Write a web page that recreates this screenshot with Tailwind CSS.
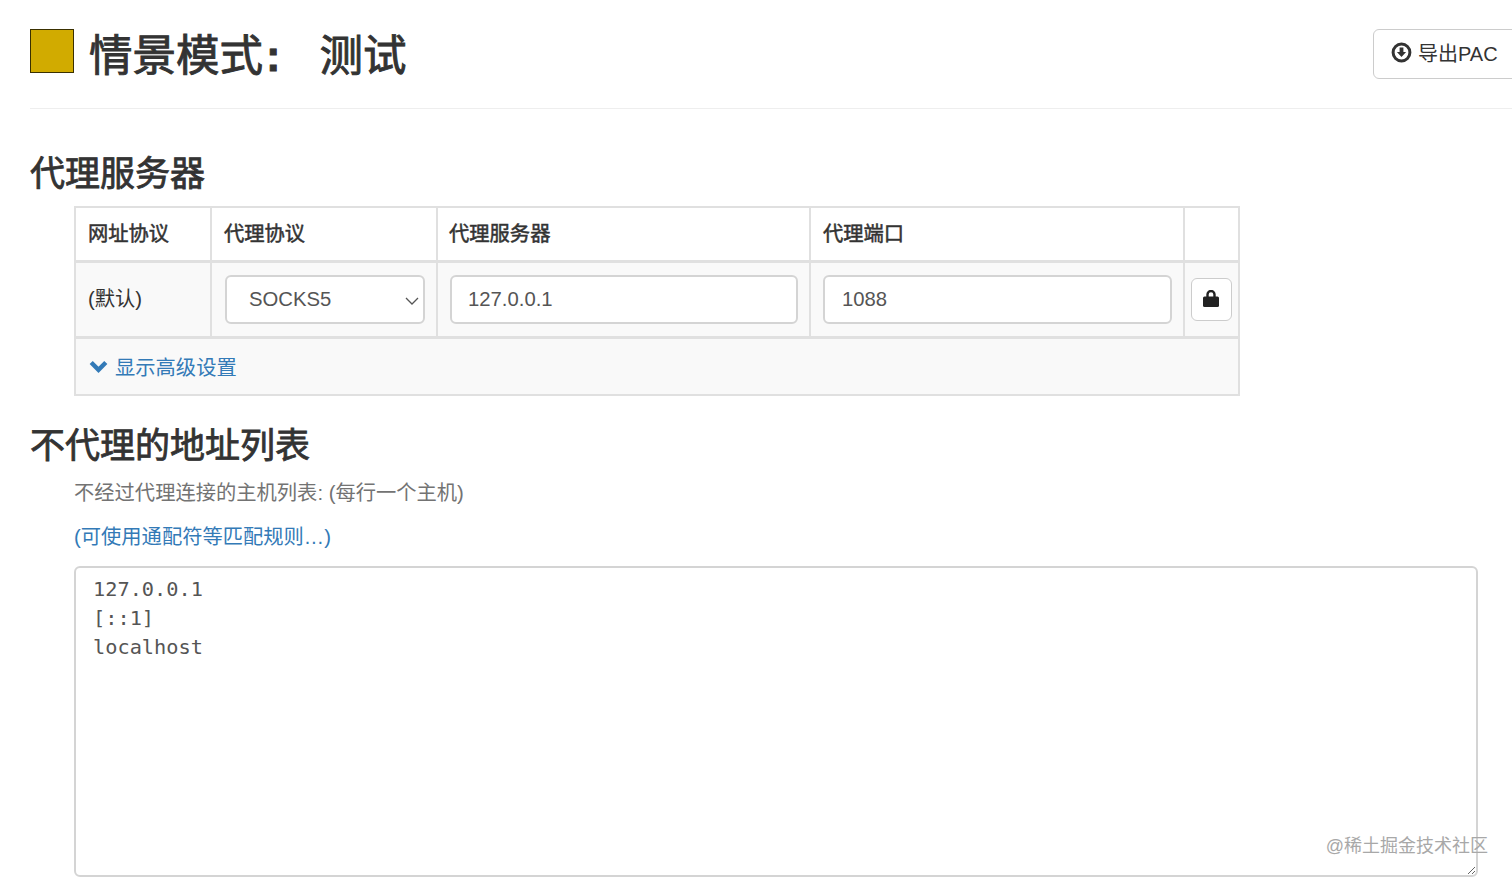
<!DOCTYPE html>
<html lang="zh-CN">
  <head>
    <meta charset="UTF-8" />
    <meta name="viewport" content="width=device-width, initial-scale=1.0" />
    <title>情景模式: 测试</title>
    <script src="https://cdn.jsdelivr.net/npm/@tailwindcss/browser@4"></script>
  </head>
  <body class="bg-white">
    <div
      class="relative h-[880px] overflow-hidden pl-[30px] text-[#333] font-['Liberation_Sans','Noto_Sans_CJK_SC',sans-serif]"
    >
      <!-- page header -->
      <header class="flex h-[109px] items-start justify-between border-b border-[#eeeeee]">
        <h1 class="mt-[29px] flex items-start text-[43.5px] leading-[50px] font-normal [-webkit-text-stroke:0.9px_#333]">
          <span class="h-[44px] w-[44px] border border-[#3a3000] bg-[#d1ab00]"></span>
          <span class="mt-[2px] ml-[15px]">情景模式</span>
          <span class="mt-[2px] ml-[3px] font-bold">:</span>
          <span class="mt-[2px] ml-[39px]">测试</span>
        </h1>
        <button
          class="mt-[29px] -mr-[12px] flex h-[50px] w-[151px] items-center rounded-[6px] border border-[#cccccc] pl-[17px] text-[20px] text-[#333]"
        >
          <svg class="mb-[4px] h-[21px] w-[21px]" viewBox="0 0 21 21">
            <circle cx="10.5" cy="10.5" r="8.4" fill="none" stroke="#333" stroke-width="3" />
            <path d="M8.6 5.5h3.8v4.6h2.7l-4.6 5-4.6-5h2.7z" fill="#333" />
          </svg>
          <span class="ml-[6px]">导出PAC</span>
        </button>
      </header>

      <h2 class="mt-[42px] text-[35px] leading-[46px] font-normal [-webkit-text-stroke:0.8px_#333]">代理服务器</h2>

      <!-- proxy table -->
      <table
        class="mt-[9px] ml-[44px] w-[1164px] table-fixed border-collapse border-2 border-[#e0e0e0] text-[20.3px]"
      >
        <colgroup>
          <col class="w-[136px]" />
          <col class="w-[226px]" />
          <col class="w-[373px]" />
          <col class="w-[374px]" />
          <col class="w-[55px]" />
        </colgroup>
        <thead>
          <tr class="h-[54px] border-b-[3px] border-[#e0e0e0] text-left">
            <th class="border-r-2 border-[#e0e0e0] pt-[1px] pl-[12px] font-normal [-webkit-text-stroke:0.5px_#333]">网址协议</th>
            <th class="border-r-2 border-[#e0e0e0] pt-[1px] pl-[12px] font-normal [-webkit-text-stroke:0.5px_#333]">代理协议</th>
            <th class="border-r-2 border-[#e0e0e0] pt-[1px] pl-[11px] font-normal [-webkit-text-stroke:0.5px_#333]">代理服务器</th>
            <th class="border-r-2 border-[#e0e0e0] pt-[1px] pl-[12px] font-normal [-webkit-text-stroke:0.5px_#333]">代理端口</th>
            <th></th>
          </tr>
        </thead>
        <tbody class="bg-[#f9f9f9]">
          <tr class="h-[76px] border-b-[3px] border-[#e0e0e0]">
            <td class="border-r-2 border-[#e0e0e0] pl-[12px]">(默认)</td>
            <td class="border-r-2 border-[#e0e0e0] pl-[13px]">
              <div
                class="relative flex h-[49px] w-[200px] items-center rounded-[6px] border-2 border-[#d4d4d4] bg-white pl-[22px] text-[#555]"
              >
                SOCKS5
                <svg class="absolute top-[20px] right-[4px] h-[8px] w-[14px]" viewBox="0 0 14 8">
                  <path d="M1 1l6 6 6-6" fill="none" stroke="#555" stroke-width="1.3" />
                </svg>
              </div>
            </td>
            <td class="border-r-2 border-[#e0e0e0] pl-[12px]">
              <input
                value="127.0.0.1"
                class="block h-[49px] w-[348px] rounded-[6px] border-2 border-[#d4d4d4] bg-white pl-[16px] text-[#555]"
              />
            </td>
            <td class="border-r-2 border-[#e0e0e0] pl-[12px]">
              <input
                value="1088"
                class="block h-[49px] w-[349px] rounded-[6px] border-2 border-[#d4d4d4] bg-white pl-[17px] text-[#555]"
              />
            </td>
            <td class="pl-[6px]">
              <button
                class="flex h-[43px] w-[41px] items-center justify-center rounded-[6px] border border-[#cccccc] bg-white pr-[2px] pb-[2px]"
              >
                <svg class="h-[17px] w-[16px]" viewBox="0 0 16 17">
                  <path d="M4.5 8V4.5a3.5 3.5 0 0 1 7 0V8" fill="none" stroke="#222" stroke-width="2.4" />
                  <rect x="0" y="6.5" width="16" height="10.5" rx="1.5" fill="#222" />
                </svg>
              </button>
            </td>
          </tr>
          <tr class="h-[58px]">
            <td colspan="5" class="pt-[4px] pl-[13px] text-[#337ab7]">
              <a href="#" class="flex items-center">
                <svg class="mb-[3px] h-[13px] w-[19px]" viewBox="0 0 19 13">
                  <path d="M2.2 2.5l7.3 7.3 7.3-7.3" fill="none" stroke="#337ab7" stroke-width="4.4" />
                </svg>
                <span class="ml-[7px]">显示高级设置</span>
              </a>
            </td>
          </tr>
        </tbody>
      </table>

      <h2 class="mt-[27px] text-[35px] leading-[46px] font-normal [-webkit-text-stroke:0.8px_#333]">不代理的地址列表</h2>

      <!-- bypass list -->
      <div class="ml-[44px] text-[20.3px]">
        <p class="mt-[9px] leading-[30px] text-[#737373]">不经过代理连接的主机列表: (每行一个主机)</p>
        <p class="mt-[14px] leading-[30px] text-[#337ab7]">(可使用通配符等匹配规则…)</p>
        <textarea
          class="mt-[14px] block h-[311px] w-[1404px] rounded-[6px] border-2 border-[#d4d4d4] px-[17px] py-[7px] font-['DejaVu_Sans_Mono',monospace] text-[20.3px] leading-[29px] text-[#555]"
        >
127.0.0.1
[::1]
localhost</textarea>
      </div>

      <!-- watermark -->
      <span class="absolute top-[833px] right-[24px] text-[18px] leading-[26px] text-[#a8a8a8]">@稀土掘金技术社区</span>
    </div>
  </body>
</html>
